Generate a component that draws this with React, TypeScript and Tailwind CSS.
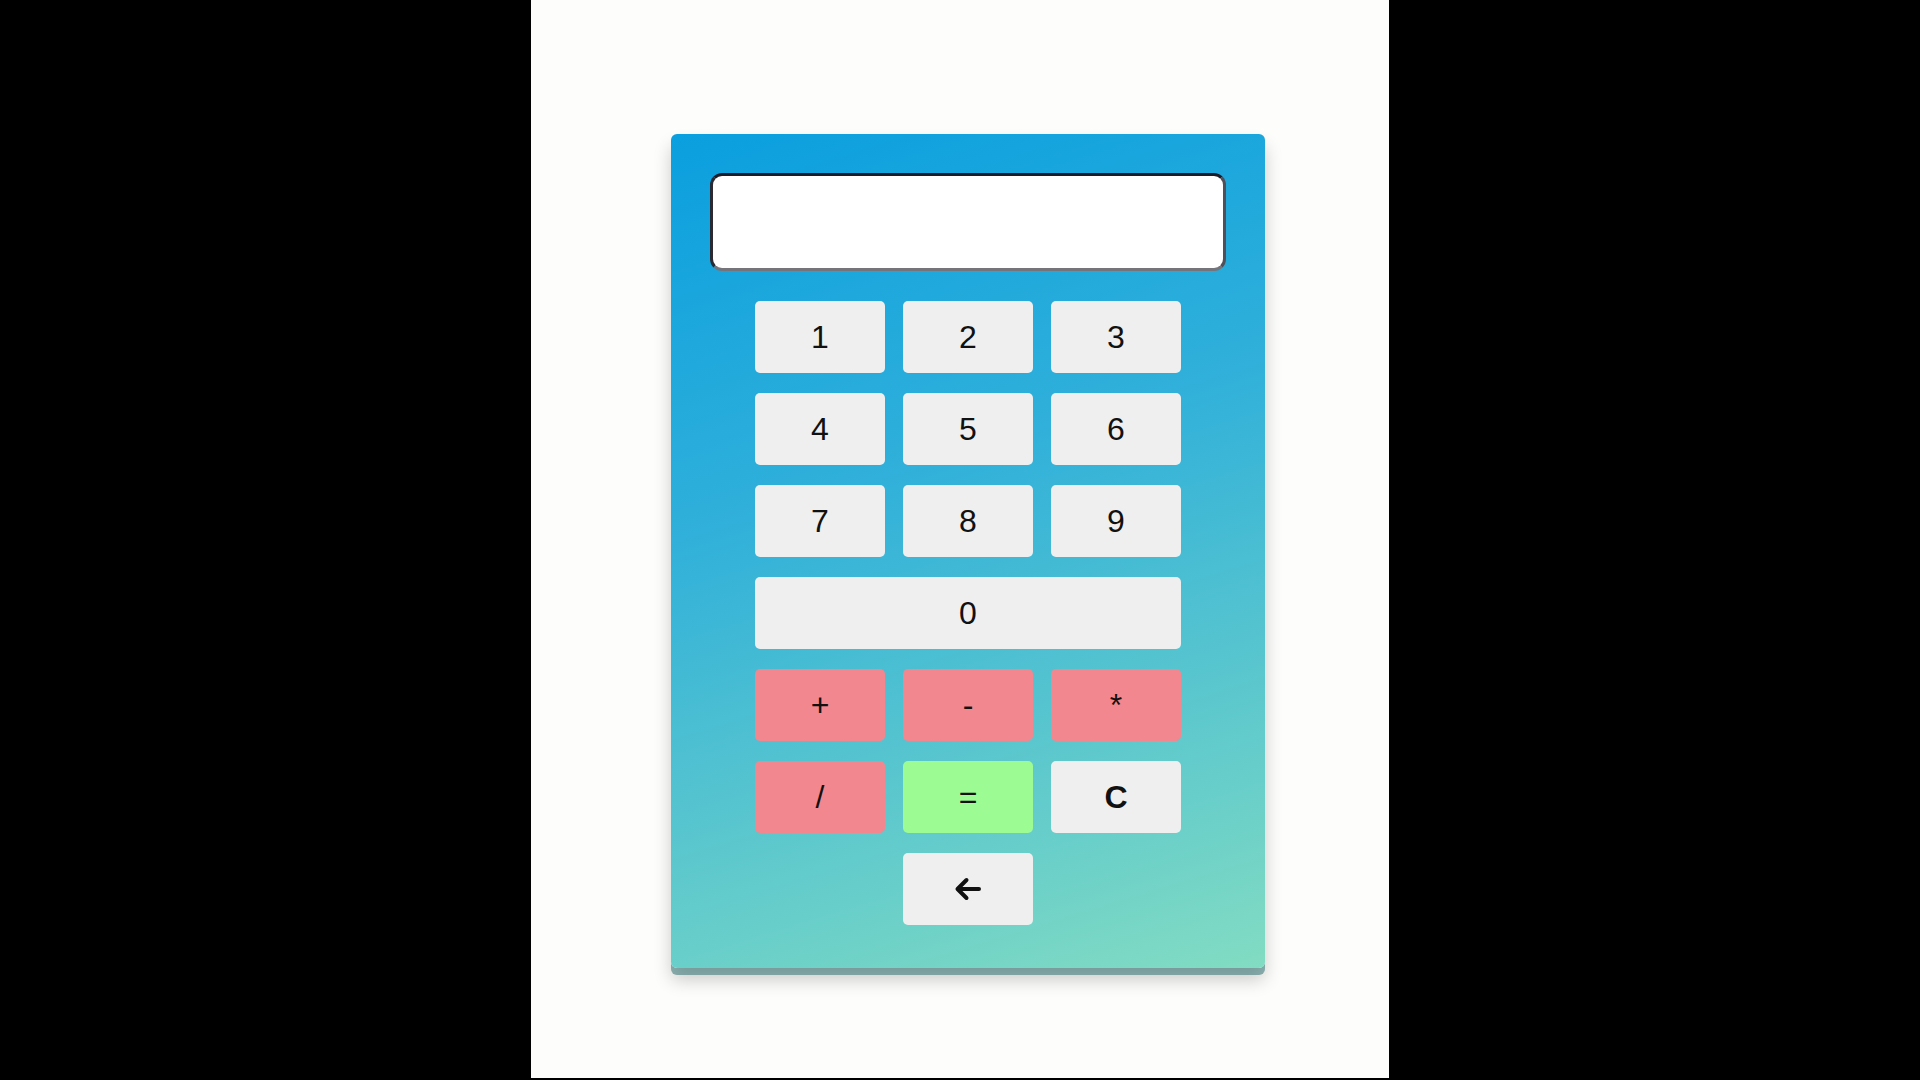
import React from "react";

const btnBase =
  "h-[72px] rounded-[5px] flex items-center justify-center text-[32px] leading-none text-[#111] select-none";

function Key({
  label,
  tone = "gray",
  className = "",
  children,
}: {
  label?: string;
  tone?: "gray" | "red" | "green";
  className?: string;
  children?: React.ReactNode;
}) {
  const bg =
    tone === "red" ? "bg-[#f3878f]" : tone === "green" ? "bg-[#9cfb93]" : "bg-[#efefef]";
  return (
    <button className={`${btnBase} ${bg} ${className}`} style={{ fontFamily: '"Liberation Sans", Arial, sans-serif' }}>
      {children ?? label}
    </button>
  );
}

export default function App() {
  return (
    <div className="w-full h-screen bg-black flex overflow-hidden">
      <div className="ml-[531px] w-[858px] h-[1078px] bg-[#fdfdfb] pt-[134px] pl-[140px]">
        <div className="w-[594px] rounded-[6px] px-[39px] pt-[39px] pb-[43px] bg-[linear-gradient(163deg,#0a9fdf_0%,#30b0da_40%,#82dcc2_100%)] shadow-[0_7px_0_rgba(35,105,110,0.5),0_12px_18px_rgba(0,0,0,0.2)]">
          <div className="h-[98px] w-full rounded-[12px] bg-white border-[3px] border-t-[#1c1c28] border-l-[#2a2a34] border-r-[#50505a] border-b-[#74747a]" />
          <div className="mt-[30px] mx-auto w-[426px] grid grid-cols-[130px_130px_130px] gap-x-[18px] gap-y-[20px]">
            <Key label="1" />
            <Key label="2" />
            <Key label="3" />
            <Key label="4" />
            <Key label="5" />
            <Key label="6" />
            <Key label="7" />
            <Key label="8" />
            <Key label="9" />
            <Key label="0" className="col-span-3" />
            <Key label="+" tone="red" />
            <Key label="-" tone="red" />
            <Key label="*" tone="red" />
            <Key label="/" tone="red" />
            <Key label="=" tone="green" />
            <Key className="font-bold">C</Key>
            <Key className="col-start-2">
              <svg width="28" height="24" viewBox="0 0 28 24" fill="none">
                <path
                  d="M25 12H4M12.5 3L3.5 12L12.5 21"
                  stroke="#111"
                  strokeWidth="4"
                  strokeLinecap="round"
                  strokeLinejoin="round"
                />
              </svg>
            </Key>
          </div>
        </div>
      </div>
    </div>
  );
}
